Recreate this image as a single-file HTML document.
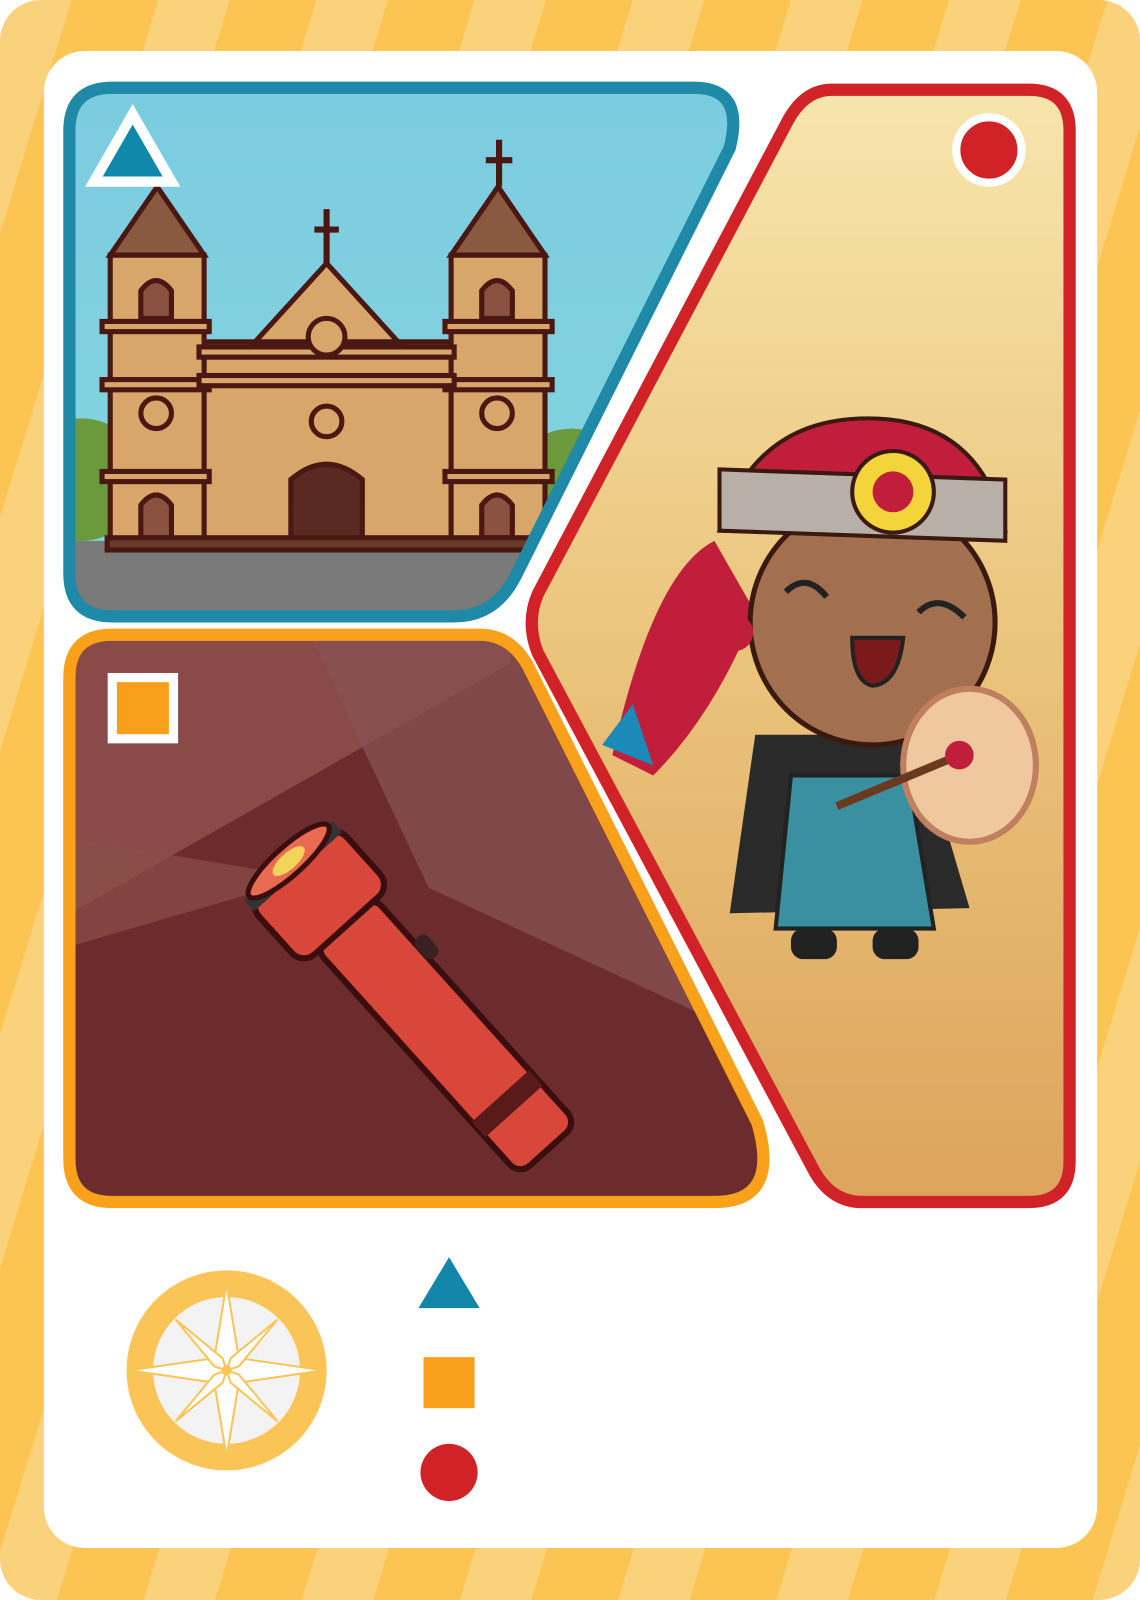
<!DOCTYPE html>
<html><head><meta charset="utf-8"><style>
html,body{margin:0;padding:0;background:#fff}
svg{display:block}
</style></head><body>
<svg width="1140" height="1600" viewBox="0 0 1117 1568" preserveAspectRatio="none" xmlns="http://www.w3.org/2000/svg">
<defs>
<pattern id="st" width="155" height="1568" patternUnits="userSpaceOnUse" patternTransform="skewX(-17)">
<rect width="155" height="1568" fill="#fcc553"/><rect x="0" width="70" height="1568" fill="#fbd27c"/>
</pattern>
<linearGradient id="sky" x1="0" y1="0" x2="0" y2="1"><stop offset="0" stop-color="#7ccbe0"/><stop offset="1" stop-color="#84d6de"/></linearGradient>
<linearGradient id="sand" x1="0" y1="0" x2="0" y2="1"><stop offset="0" stop-color="#f7e6ad"/><stop offset="0.5" stop-color="#ebc47c"/><stop offset="1" stop-color="#dca35c"/></linearGradient>
<clipPath id="c1"><path d="M110,86 L680,86 Q730,86 715,145 L505,565 Q485,604 445,604 L110,604 Q68,604 68,562 L68,128 Q68,86 110,86Z"/></clipPath>
<clipPath id="c2"><path d="M110,622 L470,622 Q500,622 517,652 L742,1100 Q765,1178 700,1178 L110,1178 Q68,1178 68,1136 L68,664 Q68,622 110,622Z"/></clipPath>
<clipPath id="c3"><path d="M815,88 L1008,88 Q1048,88 1048,128 L1048,1138 Q1048,1178 1008,1178 L845,1178 Q815,1178 798,1148 L527,640 Q515,610 527,582 L770,122 Q787,88 815,88Z"/></clipPath>
</defs>
<rect width="1117" height="1568" rx="40" fill="url(#st)"/>
<rect x="43" y="50" width="1032" height="1467" rx="40" fill="#fff"/>

<!-- church panel -->
<g clip-path="url(#c1)">
<rect x="60" y="80" width="700" height="530" fill="url(#sky)"/>
<ellipse cx="80" cy="470" rx="60" ry="60" fill="#6a9a3c"/>
<ellipse cx="560" cy="460" rx="50" ry="40" fill="#6a9a3c"/>
<rect x="60" y="530" width="700" height="80" fill="#7a7a7a"/>
<g fill="#d8a66a" stroke="#4a1712" stroke-width="5">
<rect x="195" y="335" width="250" height="200"/>
<path d="M250,335 L320,258 L390,335Z"/>
<rect x="108" y="250" width="92" height="285"/>
<rect x="442" y="250" width="92" height="285"/>
<path d="M108,250 L154,183 L200,250Z" fill="#8a5a40"/>
<path d="M442,250 L488,183 L534,250Z" fill="#8a5a40"/>
<rect x="100" y="315" width="105" height="10"/><rect x="100" y="372" width="105" height="10"/><rect x="100" y="462" width="105" height="10"/>
<rect x="436" y="315" width="105" height="10"/><rect x="436" y="372" width="105" height="10"/><rect x="436" y="462" width="105" height="10"/>
<rect x="195" y="340" width="250" height="10"/><rect x="195" y="368" width="250" height="10"/>
<circle cx="320" cy="330" r="18"/><circle cx="320" cy="413" r="15"/><circle cx="153" cy="405" r="15"/><circle cx="487" cy="405" r="15"/>
<path d="M285,527 L285,470 Q320,440 355,470 L355,527Z" fill="#5a2a22"/>
<path d="M138,527 L138,495 Q153,475 168,495 L168,527Z" fill="#8a5040"/>
<path d="M472,527 L472,495 Q487,475 502,495 L502,527Z" fill="#8a5040"/>
<path d="M138,312 L138,285 Q153,265 168,285 L168,312Z" fill="#8a5040"/>
<path d="M472,312 L472,285 Q487,265 502,285 L502,312Z" fill="#8a5040"/>
<rect x="105" y="527" width="430" height="12" fill="#6a3a2a"/>
</g>
<path d="M320,205 V258 M308,225 H332 M489,137 V183 M476,157 H502" stroke="#4a1712" stroke-width="6"/>
</g>
<path d="M110,86 L680,86 Q730,86 715,145 L505,565 Q485,604 445,604 L110,604 Q68,604 68,562 L68,128 Q68,86 110,86Z" fill="none" stroke="#1f8aa8" stroke-width="12"/>
<path d="M130,112 L168,178 L92,178Z" fill="#0f88ab" stroke="#fff" stroke-width="10" stroke-linejoin="miter"/>

<!-- flashlight panel -->
<g clip-path="url(#c2)">
<rect x="60" y="615" width="700" height="570" fill="#6c2b2d"/>
<path d="M60,615 L500,615 L500,650 L60,900Z" fill="#8a4a48"/>
<path d="M300,615 L520,615 L700,1000 L420,870Z" fill="#86504f" opacity="0.8"/>
<path d="M60,820 L300,860 L60,930Z" fill="#8a5048" opacity="0.7"/>
<g transform="translate(410,985) rotate(48)">
<rect x="-110" y="-38" width="300" height="76" rx="14" fill="#d9473a" stroke="#3a0e0e" stroke-width="6"/>
<rect x="120" y="-38" width="20" height="76" fill="#5a1a1a"/>
<rect x="-185" y="-58" width="80" height="116" rx="16" fill="#d9473a" stroke="#3a0e0e" stroke-width="6"/>
<rect x="-190" y="-58" width="14" height="116" fill="#333"/>
<ellipse cx="-190" cy="0" rx="14" ry="52" fill="#e86a50" stroke="#3a0e0e" stroke-width="5"/>
<ellipse cx="-190" cy="0" rx="8" ry="20" fill="#f3d45a"/>
<rect x="-50" y="-52" width="26" height="16" rx="7" fill="#3a2020"/>
</g>
</g>
<path d="M110,622 L470,622 Q500,622 517,652 L742,1100 Q765,1178 700,1178 L110,1178 Q68,1178 68,1136 L68,664 Q68,622 110,622Z" fill="none" stroke="#f9a11b" stroke-width="12"/>
<rect x="110" y="664" width="60" height="60" fill="#f99f1b" stroke="#fff" stroke-width="9"/>

<!-- character panel -->
<g clip-path="url(#c3)">
<rect x="510" y="80" width="545" height="1110" fill="url(#sand)"/>
<path d="M600,740 Q640,560 700,530 L740,600 Q700,700 640,760Z" fill="#c01e3a"/>
<path d="M590,730 L620,690 L640,750Z" fill="#1b8ab8"/>
<path d="M740,720 L900,720 L950,890 L715,895Z" fill="#2a2a2a"/>
<path d="M775,760 L890,760 L915,910 L760,910Z" fill="#3a8fa0" stroke="#222" stroke-width="4"/>
<rect x="775" y="910" width="45" height="30" rx="12" fill="#222"/><rect x="855" y="910" width="45" height="30" rx="12" fill="#222"/>
<circle cx="855" cy="610" r="120" fill="#a2704f" stroke="#3a1a10" stroke-width="5"/>
<path d="M705,520 Q740,410 850,410 Q960,410 985,520Z" fill="#c01e3a" stroke="#3a1a10" stroke-width="4"/>
<path d="M705,460 L985,470 L985,530 L705,520Z" fill="#b8b0a8" stroke="#3a1a10" stroke-width="4"/>
<circle cx="875" cy="482" r="40" fill="#f3d43a" stroke="#3a1a10" stroke-width="4"/>
<circle cx="875" cy="482" r="20" fill="#c01e3a"/>
<path d="M835,625 L885,625 Q880,670 855,672 Q835,668 835,625Z" fill="#7a1a1a" stroke="#222" stroke-width="4"/>
<path d="M770,580 Q790,560 810,585 M900,600 Q920,580 945,605" stroke="#222" stroke-width="6" fill="none"/>
<circle cx="720" cy="620" r="18" fill="#c01e3a"/>
<ellipse cx="950" cy="750" rx="65" ry="75" fill="#f0c8a0" stroke="#c08060" stroke-width="6"/>
<path d="M820,790 L940,740" stroke="#6a3a20" stroke-width="8"/>
<circle cx="940" cy="740" r="14" fill="#c01e3a"/>
</g>
<path d="M815,88 L1008,88 Q1048,88 1048,128 L1048,1138 Q1048,1178 1008,1178 L845,1178 Q815,1178 798,1148 L527,640 Q515,610 527,582 L770,122 Q787,88 815,88Z" fill="none" stroke="#d12227" stroke-width="12"/>
<circle cx="969" cy="147" r="32" fill="#d12227" stroke="#fff" stroke-width="8"/>

<!-- compass -->
<circle cx="222" cy="1343" r="98" fill="#fbc457"/>
<circle cx="222" cy="1343" r="72" fill="#f3f3f3"/>
<g fill="#fff" stroke="#fbc457" stroke-width="2">
<path d="M222,1258 L234,1331 L222,1343 L210,1331Z"/><path d="M222,1428 L234,1355 L222,1343 L210,1355Z"/>
<path d="M127,1343 L210,1331 L222,1343 L210,1355Z"/><path d="M317,1343 L234,1331 L222,1343 L234,1355Z"/>
<path d="M172,1293 L218,1331 L222,1343 L210,1339Z"/><path d="M272,1393 L226,1355 L222,1343 L234,1347Z"/>
<path d="M272,1293 L234,1339 L222,1343 L226,1331Z"/><path d="M172,1393 L210,1347 L222,1343 L218,1355Z"/>
</g>
<circle cx="222" cy="1343" r="5" fill="#fbc457"/>

<!-- legend -->
<path d="M440,1232 L470,1282 L410,1282Z" fill="#1287aa"/>
<rect x="415" y="1330" width="50" height="50" fill="#f99f1b"/>
<circle cx="440" cy="1443" r="28" fill="#d12227"/>
</svg>
</body></html>
